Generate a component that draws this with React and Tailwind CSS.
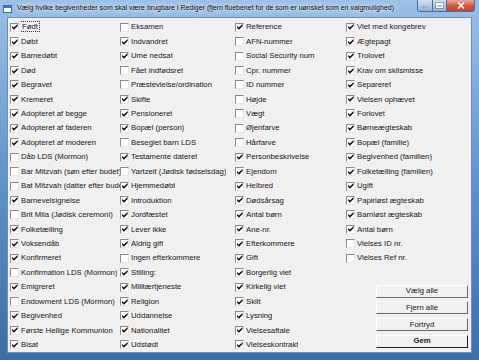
import React from "react";

const col1 = [
  ["Født", 1], ["Døbt", 1], ["Barnedøbt", 1], ["Død", 1], ["Begravet", 1], ["Kremeret", 1],
  ["Adopteret af begge", 1], ["Adopteret af faderen", 1], ["Adopteret af moderen", 1],
  ["Dåb LDS (Mormon)", 0], ["Bar Mitzvah (søn efter budet)", 0], ["Bat Mitzvah (datter efter budet)", 0],
  ["Barnevelsignelse", 1], ["Brit Mila (Jødisk ceremoni)", 0], ["Folketælling", 1], ["Voksendåb", 1],
  ["Konfirmeret", 1], ["Konfirmation LDS (Mormon)", 0], ["Emigreret", 1], ["Endowment LDS (Mormon)", 0],
  ["Begivenhed", 1], ["Første Hellige Kommunion", 1], ["Bisat", 1],
];
const col2 = [
  ["Eksamen", 0], ["Indvandret", 1], ["Ume nedsat", 1], ["Fået indfødsret", 0], ["Præstevielse/ordination", 0],
  ["Skifte", 1], ["Pensioneret", 1], ["Bopæl (person)", 1], ["Beseglet barn LDS", 0], ["Testamente dateret", 1],
  ["Yartzeit (Jødisk fødselsdag)", 0], ["Hjemmedøbt", 1], ["Introduktion", 1], ["Jordfæstet", 1], ["Lever ikke", 1],
  ["Aldrig gift", 1], ["Ingen efterkommere", 0], ["Stilling:", 1], ["Militærtjeneste", 1], ["Religion", 1],
  ["Uddannelse", 1], ["Nationalitet", 1], ["Udstødt", 1],
];
const col3 = [
  ["Reference", 1], ["AFN-nummer", 0], ["Social Security num", 0], ["Cpr. nummer", 0], ["ID nummer", 0],
  ["Højde", 0], ["Vægt", 0], ["Øjenfarve", 0], ["Hårfarve", 0], ["Personbeskrivelse", 1], ["Ejendom", 1],
  ["Helbred", 1], ["Dødsårsag", 1], ["Antal børn", 1], ["Ane-nr.", 1], ["Efterkommere", 1], ["Gift", 1],
  ["Borgerlig viet", 1], ["Kirkelig viet", 1], ["Skilt", 1], ["Lysning", 1], ["Vielsesaftale", 1], ["Vielseskontrakt", 1],
];
const col4 = [
  ["Viet med kongebrev", 1], ["Ægtepagt", 1], ["Trolovet", 1], ["Krav om skilsmisse", 1], ["Separeret", 1],
  ["Vielsen ophævet", 1], ["Forlovet", 1], ["Børneægteskab", 1], ["Bopæl (familie)", 1], ["Begivenhed (familien)", 1],
  ["Folketælling (familien)", 1], ["Ugift", 1], ["Papirløst ægteskab", 1], ["Barnløst ægteskab", 1], ["Antal børn", 1],
  ["Vielses ID nr.", 0], ["Vielses Ref nr.", 0],
];

function Box({ checked }) {
  return (
    <div className="w-[9px] h-[9px] shrink-0 bg-white border-t border-l border-t-[#8a8a8a] border-l-[#8a8a8a] border-b border-r border-b-[#e6e6e6] border-r-[#e6e6e6] flex items-center justify-center">
      {checked ? (
        <svg width="6" height="6" viewBox="0 0 7 7">
          <path d="M0 2.2 L2.2 4.2 L6.6 0 L6.6 2.4 L2.2 6.6 L0 4.4 Z" fill="#111" />
        </svg>
      ) : null}
    </div>
  );
}

function Row({ label, checked, focus }) {
  return (
    <div className="h-[14.45px] flex items-center min-w-0">
      <Box checked={checked} />
      <div className="ml-[2px] mr-[-2px] min-w-0 overflow-hidden whitespace-nowrap">
        <span className={focus ? "border border-dotted border-[#333] px-[1px] -ml-[1px]" : ""}>{label}</span>
      </div>
    </div>
  );
}

function Btn({ children, bold }) {
  return (
    <div
      className={
        "h-[13px] w-[92px] flex items-center justify-center bg-[#f0f0f0] border-t border-l border-t-white border-l-white border-b border-r " +
        (bold ? "border-b-[#222] border-r-[#222] font-bold" : "border-b-[#6a6a6a] border-r-[#6a6a6a]")
      }
    >
      {children}
    </div>
  );
}

export default function App() {
  return (
    <div
      className="w-[479px] h-[360px] overflow-hidden flex flex-col bg-gradient-to-b from-[#9cc0e6] via-[#5f93cc] to-[#3c6ea8]"
      style={{ fontFamily: '"Liberation Sans", Arial, sans-serif' }}
    >
      {/* Title bar */}
      <div className="h-[17px] shrink-0 flex items-center relative">
        <div className="ml-[3px] w-[9px] h-[8px] bg-white border border-[#3a6aa0] flex flex-col">
          <div className="h-[2px] bg-[#3a78c0]" />
        </div>
        <div className="ml-[5px] text-[7px] text-[#111] whitespace-nowrap [text-shadow:0_0_4px_#fff,0_0_6px_#fff]">
          Vælg hvilke begivenheder som skal være brugbare i Rediger (fjern fluebenet for de som er uønsket som en valgmulighed)
        </div>
        <div className="absolute right-[4px] top-0 flex h-[12px] border border-t-0 border-[#4a6e96] rounded-b-[3px] overflow-hidden">
          <div className="w-[15px] bg-gradient-to-b from-[#cfe0f3] to-[#8fb3dc] border-r border-[#4a6e96] flex items-end justify-center pb-[3px]">
            <div className="w-[6px] h-[2px] bg-white border border-[#333]/40" />
          </div>
          <div className="w-[14px] bg-gradient-to-b from-[#cfe0f3] to-[#8fb3dc] border-r border-[#4a6e96] flex items-center justify-center">
            <div className="w-[7px] h-[5px] border border-white border-t-2 outline outline-[#333]/30" />
          </div>
          <div className="w-[27px] bg-gradient-to-b from-[#e6a79a] via-[#cf5a48] to-[#c2402d] flex items-center justify-center">
            <svg width="8" height="7" viewBox="0 0 8 7">
              <path d="M1 0.5 L7 6.5 M7 0.5 L1 6.5" stroke="#fff" strokeWidth="1.6" />
            </svg>
          </div>
        </div>
      </div>
      {/* Client */}
      <div className="flex-1 mx-[7px] mb-[8px] bg-[#f0f0f0] border border-[#6f8fb5] text-[7.75px] text-[#161616]">
        <div className="grid grid-cols-[110px_115px_111px_1fr] pl-[2px] pt-[2px]">
          <div className="flex flex-col min-w-0">
            {col1.map(([l, c], i) => (
              <Row key={i} label={l} checked={c} focus={i === 0} />
            ))}
          </div>
          <div className="flex flex-col min-w-0">
            {col2.map(([l, c], i) => (
              <Row key={i} label={l} checked={c} />
            ))}
          </div>
          <div className="flex flex-col min-w-0">
            {col3.map(([l, c], i) => (
              <Row key={i} label={l} checked={c} />
            ))}
          </div>
          <div className="flex flex-col min-w-0">
            {col4.map(([l, c], i) => (
              <Row key={i} label={l} checked={c} />
            ))}
            <div className="mt-[19.3px] ml-[30px] flex flex-col gap-[3.6px]">
              <Btn>Vælg alle</Btn>
              <Btn>Fjern alle</Btn>
              <Btn>Fortryd</Btn>
              <Btn bold>Gem</Btn>
            </div>
          </div>
        </div>
      </div>
    </div>
  );
}
